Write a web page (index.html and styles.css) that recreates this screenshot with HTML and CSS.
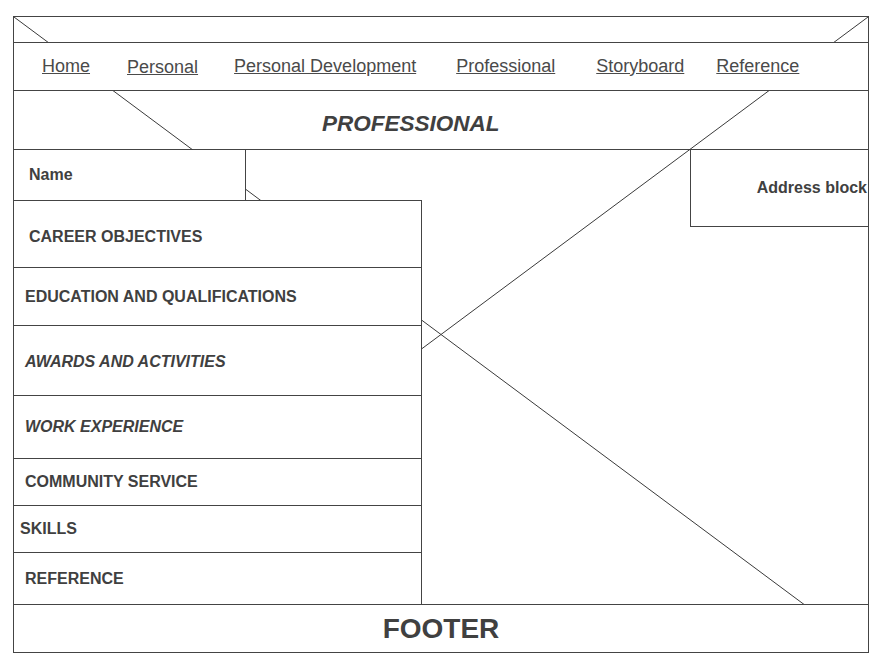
FILE: index.html
```html
<!DOCTYPE html>
<html>
<head>
<meta charset="utf-8">
<title>Professional</title>
<link rel="stylesheet" href="styles.css">
</head>
<body>
<div class="frame">
  <svg class="cross" xmlns="http://www.w3.org/2000/svg">
    <line x1="0" y1="0" x2="100%" y2="100%"/>
    <line x1="100%" y1="0" x2="0" y2="100%"/>
  </svg>
  <div class="topbar"></div>
  <nav class="nav">
    <a href="#" class="nav-link nav-home">Home</a>
    <a href="#" class="nav-link nav-personal">Personal</a>
    <a href="#" class="nav-link nav-dev">Personal Development</a>
    <a href="#" class="nav-link nav-prof">Professional</a>
    <a href="#" class="nav-link nav-story">Storyboard</a>
    <a href="#" class="nav-link nav-ref">Reference</a>
  </nav>
  <header class="title-row">
    <h1 class="title">PROFESSIONAL</h1>
  </header>
  <main class="middle">
    <div class="left-col">
      <div class="name-box">Name</div>
      <div class="sections">
        <div class="sec sec-career">CAREER OBJECTIVES</div>
        <div class="sec sec-edu">EDUCATION AND QUALIFICATIONS</div>
        <div class="sec sec-awards italic">AWARDS AND ACTIVITIES</div>
        <div class="sec sec-work italic">WORK EXPERIENCE</div>
        <div class="sec sec-comm">COMMUNITY SERVICE</div>
        <div class="sec sec-skills">SKILLS</div>
        <div class="sec sec-ref">REFERENCE</div>
      </div>
    </div>
    <div class="address">Address block</div>
  </main>
  <footer class="footer">FOOTER</footer>
</div>
</body>
</html>
```

FILE: styles.css
```css
* { box-sizing: border-box; }
html, body { margin: 0; padding: 0; background: #fff; }
body {
  font-family: "Liberation Sans", Arial, sans-serif;
  color: #404040;
}
.frame {
  position: relative;
  margin: 16px 0 0 13px;
  width: 856px;
  height: 637px;
  border: 1px solid #444;
  display: flex;
  flex-direction: column;
}
.cross {
  position: absolute;
  left: 0; top: 0;
  width: 100%; height: 100%;
  z-index: 0;
}
.cross line { stroke: #3a3a3a; stroke-width: 1; }
.topbar { height: 25px; flex: none; }
.nav {
  position: relative;
  z-index: 1;
  flex: none;
  height: 49px;
  border-top: 1px solid #444;
  border-bottom: 1px solid #444;
  background: #fff;
  display: flex;
  align-items: center;
  padding-left: 28px;
  font-size: 18px;
}
.nav-link { color: #4a4a4a; text-decoration: underline; }
.nav-personal { margin-left: 37px; position: relative; top: 1px; }
.nav-dev { margin-left: 36px; }
.nav-prof { margin-left: 40px; }
.nav-story { margin-left: 41px; }
.nav-ref { margin-left: 32px; }
.title-row {
  flex: none;
  height: 59px;
  border-bottom: 1px solid #444;
  display: flex;
  align-items: center;
  padding: 8px 0 0 308px;
}
.title {
  margin: 0;
  font-size: 22.5px;
  font-weight: bold;
  font-style: italic;
  color: #404040;
}
.middle {
  flex: none;
  height: 454px;
  display: flex;
  justify-content: space-between;
  align-items: flex-start;
}
.left-col {
  width: 408px;
  height: 100%;
  display: flex;
  flex-direction: column;
  position: relative;
  z-index: 1;
}
.name-box {
  width: 232px;
  height: 50px;
  flex: none;
  background: #fff;
  border-right: 1px solid #444;
  display: flex;
  align-items: center;
  padding-left: 15px;
  font-size: 16px;
  font-weight: bold;
}
.sections {
  flex: 1;
  background: #fff;
  border-top: 1px solid #444;
  border-right: 1px solid #444;
  display: flex;
  flex-direction: column;
}
.sec {
  display: flex;
  align-items: center;
  padding-left: 11px;
  font-size: 16px;
  font-weight: bold;
  border-bottom: 1px solid #444;
  flex: none;
}
.sec:last-child { border-bottom: none; flex: 1; }
.italic { font-style: italic; }
.sec-career { height: 67px; padding-left: 15px; padding-top: 5px; }
.sec-edu { height: 58px; }
.sec-awards { height: 70px; padding-top: 2px; }
.sec-work { height: 63px; }
.sec-comm { height: 47px; }
.sec-skills { height: 47px; padding-left: 6px; }
.address {
  position: relative;
  z-index: 1;
  width: 178px;
  height: 77px;
  background: #fff;
  border-left: 1px solid #444;
  border-bottom: 1px solid #444;
  display: flex;
  align-items: center;
  justify-content: flex-end;
  padding-right: 1px;
  font-size: 16px;
  font-weight: bold;
}
.footer {
  position: relative;
  z-index: 1;
  flex: 1;
  background: #fff;
  border-top: 1px solid #444;
  display: flex;
  align-items: center;
  justify-content: center;
  font-size: 28px;
  font-weight: bold;
}
```
